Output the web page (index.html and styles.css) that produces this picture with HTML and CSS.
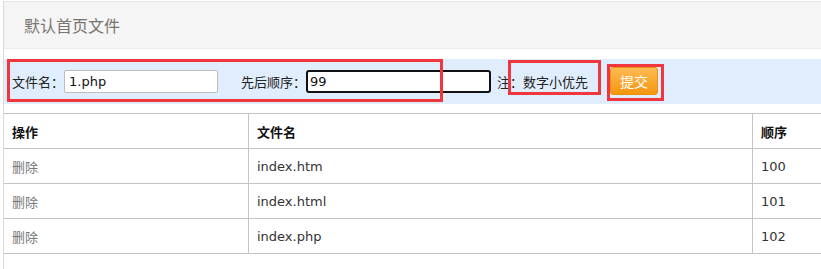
FILE: index.html
```html
<!DOCTYPE html>
<html lang="zh-CN">
<head>
<meta charset="utf-8">
<title>默认首页文件</title>
<link rel="stylesheet" href="styles.css">
</head>
<body>
<div class="page">
  <div class="panel-head">默认首页文件</div>
  <form class="form-bar">
    <label class="lbl">文件名：</label>
    <input class="field field-name" type="text" value="1.php">
    <label class="lbl lbl-order">先后顺序：</label>
    <input class="field field-order" type="text" value="99">
    <span class="note">注：</span>
    <span class="note-text">数字小优先</span>
    <button class="btn-submit" type="button">提交</button>
    <span class="mark mark-1"></span>
    <span class="mark mark-2"></span>
    <span class="mark mark-3"></span>
  </form>
  <table class="list">
    <thead>
      <tr><th class="c-op">操作</th><th class="c-name">文件名</th><th class="c-order">顺序</th></tr>
    </thead>
    <tbody>
      <tr><td><a class="del" href="#">删除</a></td><td>index.htm</td><td>100</td></tr>
      <tr><td><a class="del" href="#">删除</a></td><td>index.html</td><td>101</td></tr>
      <tr><td><a class="del" href="#">删除</a></td><td>index.php</td><td>102</td></tr>
    </tbody>
  </table>
</div>
</body>
</html>
```
FILE: styles.css
```css
html, body {
  margin: 0;
  padding: 0;
  background: #fff;
  overflow: hidden;
}
body {
  font-family: "DejaVu Sans", "Noto Sans CJK SC", sans-serif;
  font-size: 13px;
  color: #333;
}
.page {
  margin: 1px 0 0 3px;
  border-left: 1px solid #dcdcdc;
  height: 268px;
}
.panel-head {
  height: 46px;
  border-top: 1px solid #e6e6e6;
  border-bottom: 1px solid #ececec;
  background: #f5f5f5;
  padding-left: 20px;
  line-height: 46px;
  font-family: "Noto Sans CJK SC", sans-serif;
  font-size: 16px;
  color: #7a746e;
}
.form-bar {
  position: relative;
  margin: 10px 0 0 0;
  height: 45px;
  background: #e0edfc;
  display: flex;
  align-items: center;
  padding-left: 8px;
}
.lbl, .note, .note-text {
  font-family: "Noto Sans CJK SC", sans-serif;
  font-size: 13px;
  color: #222;
}
.field {
  box-sizing: border-box;
  height: 23px;
  margin: 0;
  font-family: "DejaVu Sans", sans-serif;
  font-size: 13px;
  color: #111;
  background: #fff;
  outline: none;
}
.field-name {
  width: 154px;
  border: 1px solid #bdbdbd;
  border-radius: 2px;
  padding: 0 4px;
}
.lbl-order {
  margin-left: 23px;
}
.field-order {
  width: 185px;
  border: 2px solid #111;
  border-radius: 3px;
  padding: 0 2px;
}
.note {
  margin-left: 6px;
}
.btn-submit {
  margin-left: 22px;
  width: 48px;
  height: 28px;
  padding: 0;
  border: 1px solid #e8900f;
  border-radius: 3px;
  background: linear-gradient(#fdbb52, #f4960f);
  color: #fff;
  font-family: "Noto Sans CJK SC", sans-serif;
  font-size: 14px;
  margin-top: -1px;
}
.mark {
  position: absolute;
  box-sizing: border-box;
  border: 3px solid #f2363d;
}
.mark-1 {
  left: 3px;
  top: 0;
  width: 436px;
  height: 43px;
}
.mark-2 {
  left: 504px;
  top: 1px;
  width: 93px;
  height: 35px;
}
.mark-3 {
  left: 603px;
  top: 5px;
  width: 57px;
  height: 37px;
}
.list {
  margin-top: 9px;
  width: 100%;
  border-collapse: collapse;
}
.list th, .list td {
  height: 34px;
  padding: 0 8px;
  text-align: left;
  border-top: 1px solid #c4c4c4;
  border-bottom: 1px solid #c4c4c4;
  border-left: 1px solid #c4c4c4;
}
.list th:first-child, .list td:first-child {
  border-left: none;
}
.list th {
  font-family: "Noto Sans CJK SC", sans-serif;
  font-weight: bold;
  color: #111;
}
.c-op { width: 228px; }
.c-name { width: 487px; }
.del {
  font-family: "Noto Sans CJK SC", sans-serif;
  color: #777;
  text-decoration: none;
}
```
